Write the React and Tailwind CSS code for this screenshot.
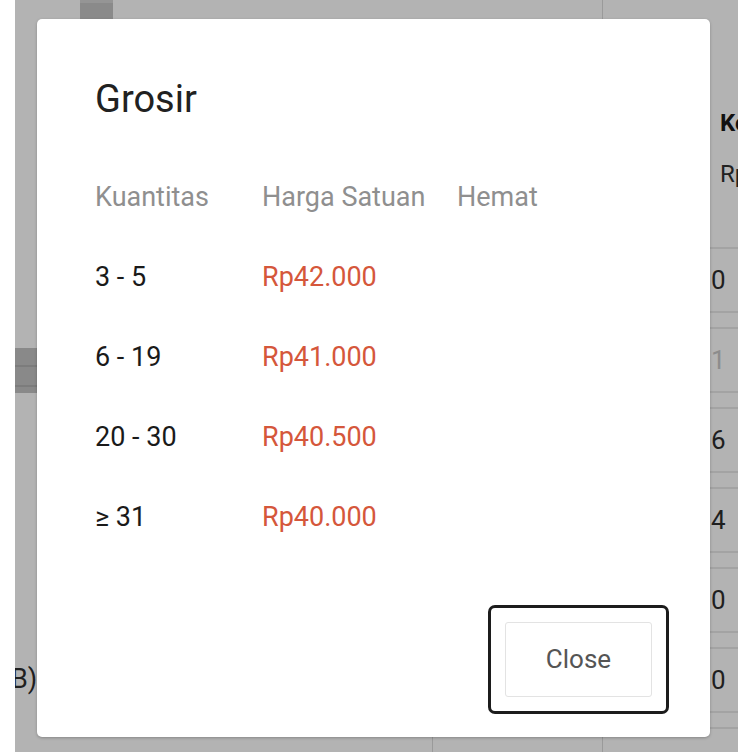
import React from 'react';

const tiers = [
  { qty: '3 - 5', price: 'Rp42.000' },
  { qty: '6 - 19', price: 'Rp41.000' },
  { qty: '20 - 30', price: 'Rp40.500' },
  { qty: '≥ 31', price: 'Rp40.000' },
];

const sideRows = [
  { value: '0', muted: false },
  { value: '1', muted: true },
  { value: '6', muted: false },
  { value: '4', muted: false },
  { value: '0', muted: false },
  { value: '0', muted: false },
];

function BackdropPage() {
  return (
    <div className="flex h-[752px] w-[752px]">
      <div className="w-[15px] bg-white" />

      {/* page under the dimmed overlay */}
      <div className="flex w-[723px] overflow-hidden bg-[#b3b3b3]">
        <div className="flex w-[417px] flex-col">
          <div className="ml-[65px] h-[19px] w-[33px] border-t-[3px] border-[#959595] bg-[#8a8a8a]" />
          <div className="mt-[329px] flex h-[45px] w-[22px] flex-col bg-[#898989]">
            <div className="h-[17px]" />
            <div className="h-[2px] bg-[#7c7c7c]" />
            <div className="h-[18px]" />
            <div className="h-[2px] bg-[#7c7c7c]" />
          </div>
          <div className="-ml-[4px] mt-[271px] text-[27px] leading-[30px] text-[#1f1f1f]">B)</div>
        </div>

        <div className="flex w-[170px] flex-col justify-end">
          <div className="h-[15px] border-l border-[#9a9a9a]" />
        </div>

        <div className="flex w-[136px] shrink-0 flex-col border-l border-[#9a9a9a]">
          <div className="whitespace-nowrap pl-[117px] pt-[107px] text-[24px] font-bold leading-[32px] text-[#111]">Ko</div>
          <div className="whitespace-nowrap pl-[117px] pt-[19px] text-[24px] leading-[32px] text-[#222]">Rp</div>
          <div className="mt-[57px] border-t-2 border-[#a3a3a3]" />
          {sideRows.map((row, i) => (
            <div key={i} className="flex flex-col">
              <div
                className={`flex h-[62px] items-center pl-[108px] text-[26px] ${row.muted ? 'text-[#8c8c8c]' : 'text-[#1f1f1f]'}`}
              >
                {row.value}
              </div>
              <div className="h-[18px] border-y-2 border-[#a3a3a3]" />
            </div>
          ))}
        </div>
      </div>

      <div className="w-[14px] bg-white" />
    </div>
  );
}

function WholesaleDialog() {
  return (
    <div className="absolute left-[37px] top-[19px] flex h-[718px] w-[673px] flex-col rounded-[5px] bg-white shadow-[0_1px_3px_rgba(0,0,0,0.25)]">
      <h2 className="pl-[58px] pt-[58px] text-[38px] leading-[44px] text-[#212121]">Grosir</h2>

      <div className="mt-[36px] pl-[58px]">
        <div className="grid h-[80px] grid-cols-[167px_195px_1fr] items-center text-[27px] text-[#8f8f8f]">
          <span>Kuantitas</span>
          <span>Harga Satuan</span>
          <span>Hemat</span>
        </div>
        {tiers.map((t) => (
          <div key={t.qty} className="grid h-[80px] grid-cols-[167px_195px_1fr] items-center text-[27px]">
            <span className="text-[#1a1a1a]">{t.qty}</span>
            <span className="text-[#d5573b]">{t.price}</span>
            <span />
          </div>
        ))}
      </div>

      <div className="mt-auto flex justify-end pb-[23px] pr-[41px]">
        <div className="rounded-[7px] border-[3px] border-[#1c1c1c] p-[14px]">
          <button
            type="button"
            className="flex h-[75px] w-[147px] items-center justify-center rounded-[3px] border border-[#e3e3e3] bg-white text-[26px] text-[#555]"
          >
            Close
          </button>
        </div>
      </div>
    </div>
  );
}

export default function App() {
  return (
    <div className="relative h-[752px] w-[752px] overflow-hidden bg-white font-['Roboto',sans-serif]">
      <BackdropPage />
      <WholesaleDialog />
    </div>
  );
}
